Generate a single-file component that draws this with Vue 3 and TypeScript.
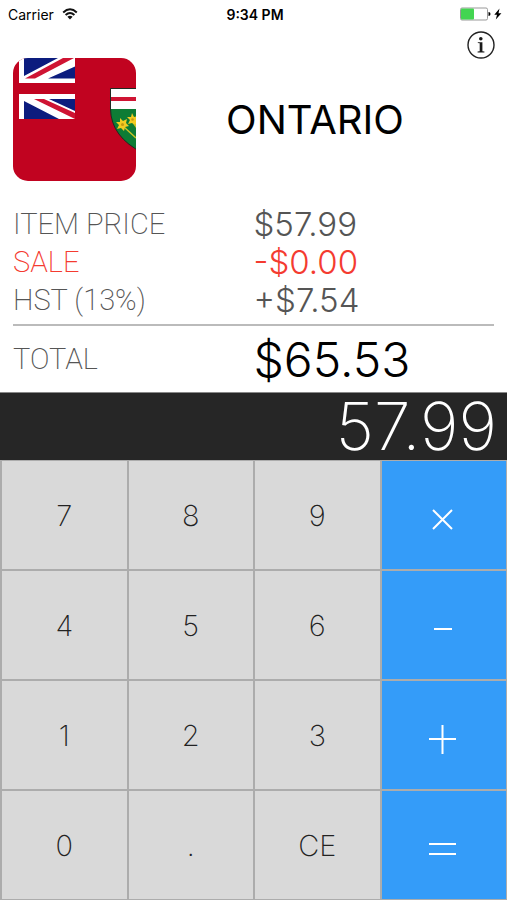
<script setup lang="ts">
import { computed, ref } from 'vue'

type Operator = 'multiply' | 'subtract' | 'add' | 'equals'

interface Key {
  label: string
  operator?: Operator
}

const taxRate = 0.13
const sale = ref(0)
const entry = ref('57.99')
const pending = ref<{ value: number; operator: Operator } | null>(null)
const fresh = ref(true)

const keys: Key[] = [
  { label: '7' }, { label: '8' }, { label: '9' }, { label: 'Multiply', operator: 'multiply' },
  { label: '4' }, { label: '5' }, { label: '6' }, { label: 'Subtract', operator: 'subtract' },
  { label: '1' }, { label: '2' }, { label: '3' }, { label: 'Add', operator: 'add' },
  { label: '0' }, { label: '.' }, { label: 'CE' }, { label: 'Equals', operator: 'equals' },
]

const strokes: Record<Operator, string> = {
  multiply: 'M6 8 L25 27 M25 8 L6 27',
  subtract: 'M7 17 H25',
  add: 'M2 17 H29 M15.5 3 V32',
  equals: 'M2 12 H29 M2 22 H29',
}

const price = computed(() => Number(entry.value) || 0)
const tax = computed(() => (price.value - sale.value) * taxRate)
const total = computed(() => price.value - sale.value + tax.value)
const money = (n: number): string => '$' + n.toFixed(2)

function calculate(a: number, b: number, operator: Operator): number {
  if (operator === 'multiply') return a * b
  if (operator === 'subtract') return a - b
  if (operator === 'add') return a + b
  return b
}

function press(key: Key): void {
  if (key.operator) {
    if (pending.value) {
      const result = calculate(pending.value.value, price.value, pending.value.operator)
      entry.value = String(Math.round(result * 100) / 100)
    }
    pending.value = key.operator === 'equals' ? null : { value: price.value, operator: key.operator }
    fresh.value = true
  } else if (key.label === 'CE') {
    entry.value = '0'
    fresh.value = true
  } else if (fresh.value) {
    entry.value = key.label === '.' ? '0.' : key.label
    fresh.value = false
  } else if (key.label !== '.' || !entry.value.includes('.')) {
    entry.value += key.label
  }
}
</script>

<template>
  <main class="app">
    <div class="status">
      <div class="carrier">
        <span>Carrier</span>
        <svg class="wifi" viewBox="0 0 16 12" aria-hidden="true">
          <path d="M1.2 4.4 Q8 -1.8 14.8 4.4" />
          <path d="M3.6 7 Q8 3 12.4 7" />
          <path class="solid" d="M5.4 8.8 Q8 6.6 10.6 8.8 L8 11.6 Z" />
        </svg>
      </div>
      <strong>9:34 PM</strong>
      <svg class="battery" viewBox="0 0 42 14" aria-hidden="true">
        <rect class="shell" x="0.5" y="1" width="27" height="12" rx="1.5" />
        <rect class="charge" x="1" y="1.5" width="13" height="11" rx="1" />
        <path d="M28.5 5 Q30.5 5.2 30.5 7 T28.5 9 Z" />
        <path d="M39.5 1.5 L34.3 7.8 H37 L35.8 12.5 L41.4 6.2 H38.5 Z" />
      </svg>
    </div>

    <div class="toolbar">
      <button class="info" type="button" aria-label="Information">
        <svg viewBox="0 0 28 28" aria-hidden="true">
          <circle class="ring" cx="14" cy="14" r="13" />
          <circle cx="13.8" cy="7.8" r="1.8" />
          <path d="M10.8 11.2 H15.4 V20.2 L17.4 20.6 V21.5 H10.6 V20.6 L12.7 20.2 V12.3 L10.8 12 Z" />
        </svg>
      </button>
    </div>

    <header class="region">
      <svg class="flag" viewBox="0 0 123 123" role="img" aria-label="Flag of Ontario">
        <rect width="123" height="123" fill="#c10320" />
        <path d="M6 0 H62 V25 H6 Z M6 36 H62 V61 H6 Z" fill="#fff" />
        <path d="M11 0 H45 L11 18 Z M35 20.5 L62 8.5 V20.5 Z" fill="#0c1c7e" />
        <path d="M11 43 V61 H46 Z M36 41 H62 V53 Z" fill="#0c1c7e" />
        <path d="M12 20.5 L50 0 H61 L22 20.5 Z M21 41 H31 L62 55 V61 Z" fill="#cf1433" />
        <path d="M97.5 30.5 H130 V95 Q98 79 97.5 51 Z" fill="#0d7c35" />
        <path d="M98 31 H123 V51 H98 Z" fill="#fff" />
        <path d="M98 39 H123 V43 H98 Z" fill="#cf1433" />
        <path d="M130 30.5 H97.5 V51 Q98 79 130 95" fill="none" stroke="#1f2a22" stroke-width="1" />
        <path d="M111 69 L123 80 M119 63 L124 70" stroke="#c8c228" stroke-width="1.5" />
        <path d="M107 60 L110 63 L114 61 L113 65 L116 68 L112 69 L111 73 L108 70 L104 71 L106 67 L103 64 L107 64 Z" fill="#f2cb22" />
        <path d="M119 55 L121 59 L125 58 L123 67 L119 65 L115 66 L117 62 L114 59 L118 59 Z" fill="#f2cb22" />
        <circle cx="109.5" cy="66.5" r="1.5" fill="#c59a12" />
        <circle cx="119.5" cy="61.5" r="1.3" fill="#c59a12" />
      </svg>
      <h1>ONTARIO</h1>
    </header>

    <dl class="summary">
      <div class="row"><dt>ITEM PRICE</dt><dd>{{ money(price) }}</dd></div>
      <div class="row sale"><dt>SALE</dt><dd>-{{ money(sale) }}</dd></div>
      <div class="row"><dt>HST (13%)</dt><dd>+{{ money(tax) }}</dd></div>
      <div class="row total"><dt>TOTAL</dt><dd>{{ money(total) }}</dd></div>
    </dl>

    <output class="display">{{ entry }}</output>

    <div class="keypad">
      <button
        v-for="key in keys"
        :key="key.label"
        type="button"
        class="key"
        :class="{ operator: key.operator }"
        :aria-label="key.operator ? key.label : undefined"
        @click="press(key)"
      >
        <svg v-if="key.operator" viewBox="0 0 31 35" aria-hidden="true">
          <path :d="strokes[key.operator]" />
        </svg>
        <template v-else>{{ key.label }}</template>
      </button>
    </div>
  </main>
</template>

<style>
body {
  margin: 0;
  background: #fff;
}
</style>

<style scoped>
.app {
  display: flex;
  flex-direction: column;
  min-height: 100vh;
  font-family: Inter, "Liberation Sans", sans-serif;
  color: #000;
}

.status {
  display: grid;
  grid-template-columns: 1fr auto 1fr;
  align-items: center;
  height: 28px;
  padding: 0 5px 0 8px;
  font-size: 14px;
}

.status strong {
  font-size: 14px;
  font-weight: 600;
}

.carrier {
  display: flex;
  align-items: center;
  gap: 8px;
}

.wifi {
  width: 16px;
  height: 12px;
  fill: none;
  stroke: #111;
  stroke-width: 2;
}

.wifi .solid {
  fill: #111;
  stroke: none;
}

.battery {
  justify-self: end;
  width: 42px;
  height: 14px;
}

.battery .shell {
  fill: #fff;
  stroke: #999;
}

.battery .charge {
  fill: #43d551;
}

.toolbar {
  display: flex;
  justify-content: flex-end;
  height: 30px;
  padding: 0 12px;
}

.info {
  width: 28px;
  height: 28px;
  margin-top: 3px;
  padding: 0;
  border: 0;
  background: none;
}

.info svg {
  display: block;
  fill: #1a1a1a;
}

.info .ring {
  fill: none;
  stroke: #222;
  stroke-width: 1.4;
}

.region {
  display: flex;
  align-items: center;
  padding: 0 13px;
}

.flag {
  flex: none;
  width: 123px;
  height: 123px;
  border-radius: 15px;
}

h1 {
  flex: 1;
  margin: 0;
  font-size: 40px;
  font-weight: 400;
  text-align: center;
}

.summary {
  margin: 0;
  padding: 23px 13px 0;
}

.row {
  display: grid;
  grid-template-columns: 1fr 1fr;
  align-items: center;
  height: 38px;
  color: #555;
}

.row dt {
  font-family: Roboto, Inter, sans-serif;
  font-size: 29px;
  font-weight: 200;
  white-space: nowrap;
}

.row dd {
  margin: 0;
  font-size: 33px;
  font-weight: 300;
}

.row.sale {
  color: #f43b30;
}

.row.total {
  height: 66px;
  margin-top: 6px;
  border-top: 2px solid #bbb;
}

.row.total dd {
  font-size: 48px;
  color: #000;
}

.display {
  display: block;
  height: 67px;
  padding: 0 10px;
  border-top: 1px solid #888;
  background: #262626;
  color: #fff;
  font-size: 66px;
  font-weight: 200;
  line-height: 67px;
  text-align: right;
}

.keypad {
  display: grid;
  flex: 1;
  grid-template-columns: repeat(4, 1fr);
  grid-auto-rows: 1fr;
  gap: 2px;
  padding: 1px 1px 1px 2px;
  background: #acacac;
}

.key {
  display: flex;
  align-items: center;
  justify-content: center;
  min-height: 64px;
  padding: 0;
  border: 0;
  background: #d9d9d9;
  color: #222;
  font-family: inherit;
  font-size: 29px;
  font-weight: 200;
}

.key.operator {
  padding: 8px 2px 0 0;
  background: #349cf9;
}

.key svg {
  width: 31px;
  height: 35px;
  fill: none;
  stroke: #fff;
  stroke-width: 2;
}
</style>
